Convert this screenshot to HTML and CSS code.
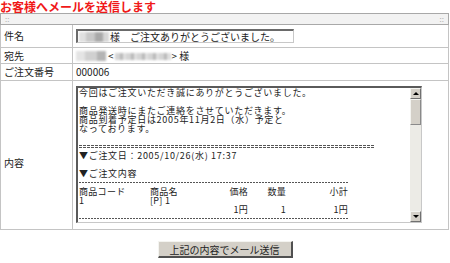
FILE: index.html
```html
<!DOCTYPE html>
<html lang="ja">
<head>
  <meta charset="UTF-8">
  <title>お客様へメールを送信します</title>
  <link rel="stylesheet" href="styles.css">
</head>
<body>
  <h1 class="page-title">お客様へメールを送信します</h1>

  <table class="mail-form">
    <colgroup>
      <col class="col-label">
      <col class="col-value">
    </colgroup>
    <tr class="grip-row">
      <td colspan="2"><span class="grip">::</span><span class="grip">::</span></td>
    </tr>
    <tr class="row-subject">
      <th>件名</th>
      <td>
        <div class="text-field"><span class="blur blur-name"></span>様　ご注文ありがとうございました。</div>
      </td>
    </tr>
    <tr class="row-to">
      <th>宛先</th>
      <td><span class="blur blur-name"></span>&lt;<span class="blur blur-mail"></span>&gt; 様</td>
    </tr>
    <tr class="row-order">
      <th>ご注文番号</th>
      <td>000006</td>
    </tr>
    <tr class="row-body">
      <th>内容</th>
      <td>
        <div class="text-area">
          <div class="text-body">
            <p>今回はご注文いただき誠にありがとうございました。</p>
            <p></p>
            <p>商品発送時にまたご連絡をさせていただきます。</p>
            <p>商品到着予定日は2005年11月2日（水）予定と</p>
            <p>なっております。</p>
            <p></p>
            <p class="rule rule-double"></p>
            <p>▼ご注文日：2005/10/26(水) 17:37</p>
            <p></p>
            <p>▼ご注文内容</p>
            <p class="rule rule-dash"></p>
            <div class="items">
              <span>商品コード</span><span>商品名</span><span class="num">価格</span><span class="num">数量</span><span class="num">小計</span>
            </div>
            <div class="items">
              <span>1</span><span>[P] 1</span><span></span><span></span><span></span>
            </div>
            <div class="items">
              <span></span><span></span><span class="num">1円</span><span class="num">1</span><span class="num">1円</span>
            </div>
            <p class="rule rule-dash"></p>
            <div class="items">
              <span></span><span></span><span></span><span class="num">1点</span><span class="num">1円</span>
            </div>
          </div>
          <div class="scrollbar">
            <div class="sb-button"><span class="arrow-up"></span></div>
            <div class="sb-thumb"></div>
            <div class="sb-track"></div>
            <div class="sb-button"><span class="arrow-down"></span></div>
          </div>
        </div>
      </td>
    </tr>
  </table>

  <div class="actions">
    <button class="send-button">上記の内容でメール送信</button>
  </div>
</body>
</html>
```

FILE: styles.css
```css
body {
  margin: 0;
  font-family: "Noto Sans CJK JP", "DejaVu Sans", sans-serif;
  font-size: 10px;
  color: #222;
  background: #fff;
}
.page-title {
  margin: 0;
  height: 13px;
  font-size: 12px;
  line-height: 13px;
  font-weight: bold;
  color: #f01818;
}

.mail-form {
  width: 449px;
  border-collapse: collapse;
  border: 1px solid #a8a8a8;
  table-layout: fixed;
}
.col-label {
  width: 72px;
}
.mail-form th,
.mail-form td {
  border: 1px solid #c4c4c4;
  padding: 0 3px;
  text-align: left;
  font-weight: normal;
  vertical-align: middle;
  line-height: 12px;
}

.grip-row td {
  height: 10px;
  padding: 0 4px;
  border-color: #a8a8a8;
  background-color: #ececec;
  background-image: repeating-linear-gradient(90deg, rgba(255,255,255,0.6) 0 1px, transparent 1px 2px);
  font-size: 8px;
  line-height: 10px;
  color: #b0b0b0;
}
.grip {
  display: inline-block;
}
.grip + .grip {
  float: right;
}

.row-subject th, .row-subject td { height: 22px; }
.row-to th, .row-to td { height: 15px; }
.row-order th, .row-order td { height: 16px; }
.row-body td { height: 139px; padding-top: 4px; padding-bottom: 5px; }
.row-body th { padding-top: 16px; }

.text-field {
  width: 213px;
  height: 11px;
  padding: 0 1px;
  line-height: 11px;
  border-style: solid;
  border-width: 2px 1px 1px 2px;
  border-color: #6a6a6a #c8c8c8 #c8c8c8 #6a6a6a;
  white-space: nowrap;
  overflow: hidden;
}

.blur {
  display: inline-block;
  height: 10px;
  vertical-align: -1px;
  filter: blur(1px);
}
.blur-name {
  width: 30px;
  margin-right: 1px;
  background: linear-gradient(90deg, #e0e0e0 0 25%, #c8c8c8 25% 55%, #a8a8a8 55% 80%, #d6d6d6 80%);
}
.row-to .blur-name {
  background: linear-gradient(90deg, #e4e4e4 0 30%, #d0d0d0 30% 70%, #b4b4b4 70%);
  margin-right: 2px;
}
.blur-mail {
  width: 56px;
  height: 7px;
  margin: 0 1px;
  vertical-align: 0;
  background: repeating-linear-gradient(90deg, #d4d4d4 0 5px, #b8b8b8 5px 8px, #e0e0e0 8px 11px);
}

.text-area {
  display: flex;
  width: 343px;
  height: 134px;
  border-style: solid;
  border-width: 2px 1px 1px 2px;
  border-color: #5a5a5a #c8c8c8 #c8c8c8 #5a5a5a;
  background: #fff;
}
.text-body {
  flex: 1;
  min-width: 0;
  overflow: hidden;
  padding: 0 1px;
  font-size: 9px;
  letter-spacing: 0.7px;
  line-height: 9px;
  white-space: nowrap;
}
.text-body p {
  margin: 0;
  height: 9px;
}
.rule-double {
  width: 295px;
  background:
    repeating-linear-gradient(90deg, #555 0 3px, transparent 3px 4px) 0 3px / 100% 1px no-repeat,
    repeating-linear-gradient(90deg, #555 0 3px, transparent 3px 4px) 0 5px / 100% 1px no-repeat;
}
.rule-dash {
  width: 270px;
  background: repeating-linear-gradient(90deg, #555 0 2px, transparent 2px 3px) 0 4px / 100% 1px no-repeat;
}
.items {
  display: grid;
  grid-template-columns: 71px 78px 20px 38px 62px;
  height: 9px;
  letter-spacing: 0.3px;
}
.items .num {
  text-align: right;
}

.scrollbar {
  width: 11px;
  flex: none;
  display: flex;
  flex-direction: column;
  background: #eeede8;
}
.sb-button {
  height: 11px;
  box-sizing: border-box;
  background: #d4d0c8;
  border-style: solid;
  border-width: 1px;
  border-color: #f4f4f0 #707070 #707070 #f4f4f0;
  display: flex;
  align-items: center;
  justify-content: center;
}
.arrow-up,
.arrow-down {
  width: 0;
  height: 0;
  border-left: 3px solid transparent;
  border-right: 3px solid transparent;
}
.arrow-up { border-bottom: 3px solid #000; }
.arrow-down { border-top: 3px solid #000; }
.sb-thumb {
  height: 26px;
  box-sizing: border-box;
  background: #d4d0c8;
  border-style: solid;
  border-width: 1px;
  border-color: #f4f4f0 #8a8a8a #8a8a8a #f4f4f0;
}
.sb-track {
  flex: 1;
  background: #ecebe6;
}

.actions {
  display: flex;
  justify-content: center;
  padding-top: 11px;
}
.send-button {
  width: 135px;
  height: 17px;
  padding: 0;
  font-family: inherit;
  font-size: 10px;
  line-height: 13px;
  color: #222;
  background: #d4d0c8;
  border-style: solid;
  border-width: 1px 2px 2px 1px;
  border-color: #f4f4f0 #505050 #505050 #f4f4f0;
}
```
